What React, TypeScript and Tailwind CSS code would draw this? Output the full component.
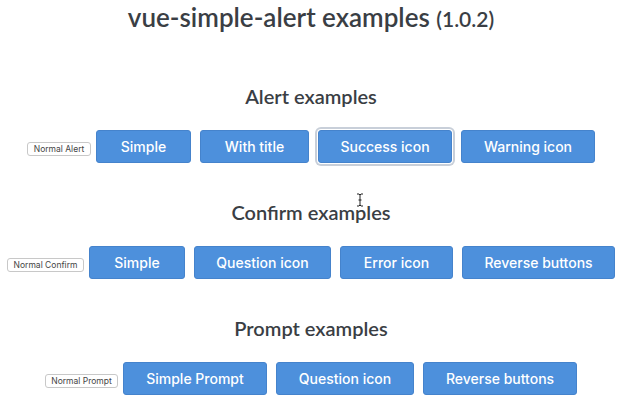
type Btn = { label: string; width: string; focused?: boolean };

type Section = {
  title: string;
  top: string;
  normal: { label: string; width: string };
  buttons: Btn[];
};

const sections: Section[] = [
  {
    title: "Alert examples",
    top: "mt-[50px]",
    normal: { label: "Normal Alert", width: "w-[64px]" },
    buttons: [
      { label: "Simple", width: "w-[95px]" },
      { label: "With title", width: "w-[109px]" },
      { label: "Success icon", width: "w-[134px]", focused: true },
      { label: "Warning icon", width: "w-[134px]" },
    ],
  },
  {
    title: "Confirm examples",
    top: "mt-[37px]",
    normal: { label: "Normal Confirm", width: "w-[77px]" },
    buttons: [
      { label: "Simple", width: "w-[96px]" },
      { label: "Question icon", width: "w-[137px]" },
      { label: "Error icon", width: "w-[113px]" },
      { label: "Reverse buttons", width: "w-[153px]" },
    ],
  },
  {
    title: "Prompt examples",
    top: "mt-[37px]",
    normal: { label: "Normal Prompt", width: "w-[73px]" },
    buttons: [
      { label: "Simple Prompt", width: "w-[144px]" },
      { label: "Question icon", width: "w-[138px]" },
      { label: "Reverse buttons", width: "w-[154px]" },
    ],
  },
];

function TextCursor() {
  return (
    <svg
      className="absolute left-[356px] top-[193px]"
      width="8"
      height="14"
      viewBox="0 0 8 14"
      fill="none"
    >
      <path d="M1 1h2l1 1 1-1h2M4 2v10M1 13h2l1-1 1 1h2M2.5 7h3" stroke="#222" strokeWidth="1" />
    </svg>
  );
}

export default function App() {
  return (
    <div className="relative h-[400px] w-[640px] overflow-hidden bg-white pr-[18px] text-[#3a3e44] [font-family:Lato,'Noto_Sans',sans-serif]">
      <h1 className="mt-[2px] text-center text-[26px] font-semibold leading-[30px]">
        vue-simple-alert examples <span className="text-[21px]">(1.0.2)</span>
      </h1>

      {sections.map((section) => (
        <section key={section.title}>
          <h2
            className={`${section.top} text-center text-[20px] font-semibold leading-[24px]`}
          >
            {section.title}
          </h2>
          <div className="mt-[22px] flex items-start justify-center">
            <button
              className={`${section.normal.width} mt-[12px] h-[14px] rounded-[3px] border border-[#c8c8c8] bg-white text-[8.5px] leading-[12px] text-[#444] [font-family:Inter,sans-serif]`}
            >
              {section.normal.label}
            </button>
            {section.buttons.map((btn, index) => (
              <button
                key={btn.label}
                className={`${btn.width} ${index === 0 ? "ml-[5px]" : "ml-[9px]"} h-[33px] rounded-[3px] border border-[#4583cc] bg-[#4d90dc] text-[14px] font-medium text-white [font-family:Inter,sans-serif] ${
                  btn.focused ? "shadow-[0_0_0_1px_#fff,0_0_0_3px_#c8cfd9]" : ""
                }`}
              >
                {btn.label}
              </button>
            ))}
          </div>
        </section>
      ))}

      <TextCursor />
    </div>
  );
}
